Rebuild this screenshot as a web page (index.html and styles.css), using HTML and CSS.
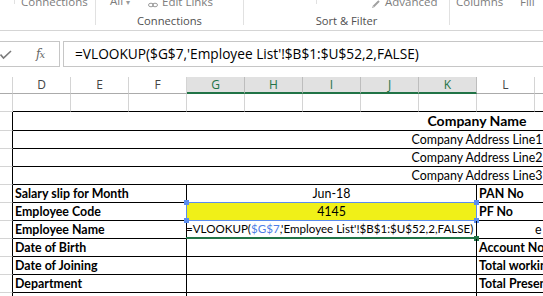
FILE: index.html
```html
<!DOCTYPE html>
<html>
<head>
<meta charset="utf-8">
<link rel="stylesheet" href="styles.css">
</head>
<body>
<div class="ribbon">
  <div class="grp g1">
    <div class="top"><span class="tsep s1"></span><span class="conn">Connections</span></div>
    <div class="lbl"></div>
  </div>
  <div class="grp g2">
    <div class="top">
      <span class="all">All <span class="caret">▾</span></span>
      <svg class="link" width="10" height="8" viewBox="0 0 10 8"><ellipse cx="3" cy="5" rx="2.5" ry="1.8" fill="none" stroke="#9a9a9a" stroke-width="1"/><ellipse cx="7" cy="5" rx="2.5" ry="1.8" fill="none" stroke="#9a9a9a" stroke-width="1"/></svg>
      <span class="edit">Edit Links</span>
    </div>
    <div class="lbl">Connections</div>
  </div>
  <div class="grp g3">
    <div class="top">
      <span class="tsep s2"></span>
      <svg class="adv" width="9" height="8" viewBox="0 0 9 8"><path d="M1 7 L7 1" stroke="#a0a0a0" stroke-width="2"/><path d="M0 8 L2 6" stroke="#c0c0c0" stroke-width="1"/></svg>
      <span class="advt">Advanced</span>
    </div>
    <div class="lbl">Sort &amp; Filter</div>
  </div>
  <div class="grp g4">
    <div class="top"><span class="cols">Columns</span><span>Fill</span></div>
    <div class="lbl"></div>
  </div>
</div>

<div class="fbar">
  <div class="fl">
    <svg class="check" width="12" height="10" viewBox="0 0 12 10"><polyline points="0.5,4.5 3.5,8 11,1" fill="none" stroke="#7a7a7a" stroke-width="1.6"/></svg>
    <span class="fx"><i>f</i><i class="x">x</i></span>
  </div>
  <div class="fi">=VLOOKUP($G$7,'Employee List'!$B$1:$U$52,2,FALSE)</div>
</div>

<div class="sheet">
  <div class="row hdr">
    <div class="rh"></div>
    <div>D</div><div>E</div><div>F</div>
    <div class="sel">G</div><div class="sel">H</div><div class="sel">I</div><div class="sel">J</div><div class="sel">K</div>
    <div>L</div><div></div><div></div><div></div><div></div><div></div><div></div><div></div>
  </div>
  <div class="row r1">
    <div class="rh"></div>
    <div></div><div></div><div></div><div></div><div></div><div></div><div></div><div></div><div></div><div></div><div></div><div></div><div></div><div></div><div></div><div></div>
  </div>
  <div class="row tbl tall">
    <div class="rh"></div>
    <div class="full b title">Company Name</div>
  </div>
  <div class="row tbl">
    <div class="rh"></div>
    <div class="full">Company Address Line1</div>
  </div>
  <div class="row tbl">
    <div class="rh"></div>
    <div class="full">Company Address Line2</div>
  </div>
  <div class="row tbl">
    <div class="rh"></div>
    <div class="full">Company Address Line3</div>
  </div>
  <div class="row tbl">
    <div class="rh"></div>
    <div class="lab b">Salary slip for Month</div>
    <div class="val">Jun-18</div>
    <div class="lc b">PAN No</div>
  </div>
  <div class="row tbl">
    <div class="rh"></div>
    <div class="lab b">Employee Code</div>
    <div class="val yellow">4145
      <div class="refbox">
        <span class="h tl"></span><span class="h tr"></span><span class="h bl"></span><span class="h br"></span>
      </div>
    </div>
    <div class="lc b">PF No</div>
  </div>
  <div class="row tbl">
    <div class="rh"></div>
    <div class="lab b">Employee Name</div>
    <div class="val edit-cell">=VLOOKUP(<span class="ref">$G$7</span>,'Employee List'!$B$1:$U$52,2,FALSE)<span class="gh"></span></div>
    <div class="lc epad">e</div>
  </div>
  <div class="row tbl">
    <div class="rh"></div>
    <div class="lab b">Date of Birth</div>
    <div class="val"></div>
    <div class="lc b">Account No.</div>
  </div>
  <div class="row tbl">
    <div class="rh"></div>
    <div class="lab b">Date of Joining</div>
    <div class="val"></div>
    <div class="lc b">Total working days</div>
  </div>
  <div class="row tbl">
    <div class="rh"></div>
    <div class="lab b">Department</div>
    <div class="val"></div>
    <div class="lc b">Total Present days</div>
  </div>
  <div class="row tbl">
    <div class="rh"></div>
    <div class="lab b">Designation</div>
    <div class="val"></div>
    <div class="lc b">Total Leave</div>
  </div>
</div>
</body>
</html>
```

FILE: styles.css
```css
html, body {
  margin: 0;
  padding: 0;
}
body {
  width: 543px;
  height: 296px;
  overflow: hidden;
  background: #ffffff;
  font-family: "Open Sans", "Liberation Sans", sans-serif;
}

/* Ribbon */
.ribbon {
  display: flex;
  height: 30px;
  border-bottom: 1px solid #d5d5d5;
}
.grp {
  flex: none;
  height: 25px;
  border-right: 1px solid #e1e1e1;
}
.g1 { width: 95px; }
.g2 { width: 147px; }
.g3 { width: 205px; }
.g4 { flex: 1; border-right: none; }

.top {
  height: 8px;
  overflow: hidden;
  display: flex;
  align-items: flex-end;
  font-size: 11.5px;
  line-height: 12px;
  color: #7d7d7d;
  white-space: nowrap;
}
.tsep {
  width: 1px;
  height: 4px;
  background: #e1e1e1;
  align-self: flex-start;
  flex: none;
}
.s1 { margin-left: 14px; }
.conn { margin-left: 6px; }
.all { margin-left: 14px; width: 38px; flex: none; }
.caret { font-size: 8px; color: #9a9a9a; }
.link { flex: none; }
.edit { margin-left: 4px; }
.s2 { margin-left: 72px; }
.adv { margin-left: 55px; flex: none; }
.advt { margin-left: 4px; }
.cols { margin-left: 6px; width: 64px; flex: none; }

.lbl {
  margin-top: 7px;
  font-size: 11.2px;
  line-height: 12px;
  color: #505050;
  text-align: center;
  white-space: nowrap;
}

/* Formula bar */
.fbar {
  display: flex;
  gap: 3px;
  margin-top: 10px;
  height: 26px;
}
.fl {
  box-sizing: border-box;
  width: 60px;
  height: 26px;
  border: 1px solid #c6c6c6;
  border-left: none;
  display: flex;
  align-items: center;
}
.check { margin-top: 1px; flex: none; }
.fx {
  margin-left: 24px;
  font-family: "DejaVu Serif", "Liberation Serif", serif;
  font-size: 12px;
  color: #666;
  letter-spacing: -1px;
}
.fx .x { font-size: 10px; }
.fi {
  box-sizing: border-box;
  flex: 1;
  height: 26px;
  border: 1px solid #c6c6c6;
  border-right: none;
  padding-left: 11px;
  font-size: 13.7px;
  line-height: 24px;
  color: #000;
  white-space: nowrap;
  overflow: hidden;
}

/* Sheet */
.sheet {
  margin-top: 10px;
  width: 543px;
  overflow: hidden;
}
.row {
  display: grid;
  grid-template-columns: 13px repeat(16, 58px);
  width: 941px;
  height: 18px;
}
.row > div {
  box-sizing: border-box;
  border-right: 1px solid #d4d4d4;
  border-bottom: 1px solid #d4d4d4;
  overflow: hidden;
  white-space: nowrap;
}

.hdr { height: 17px; }
.hdr > div {
  border-bottom: 1px solid #ababab;
  font-size: 12px;
  line-height: 16px;
  text-align: center;
  color: #444;
}
.hdr > .sel {
  background: #e1e1e1;
  color: #217346;
  border-right-color: #bdbdbd;
  border-bottom: 2px solid #217346;
  line-height: 15px;
}

.r1 > div { border-bottom-color: #000; }
.r1 > .rh { border-bottom-color: #d4d4d4; }

.tbl > div {
  font-family: "Lato", "Open Sans", sans-serif;
  font-size: 12.4px;
  line-height: 17px;
  color: #000;
  border-bottom-color: #000;
  border-right-color: #000;
}
.tbl > .rh {
  border-bottom-color: #d4d4d4;
  border-right-color: #000;
}
.tall { height: 19px; }
.tall > div { line-height: 18px; }
.b { font-weight: bold; }
.tbl > .title { font-size: 14px; }

.full {
  grid-column: 2 / -1;
  text-align: center;
  border-right: none !important;
}
.lab {
  grid-column: span 3;
  padding-left: 2px;
}
.val {
  grid-column: span 5;
  text-align: center;
  position: relative;
  overflow: visible !important;
}
.lc {
  grid-column: span 8;
  padding-left: 2px;
  border-right: none !important;
}
.epad { padding-left: 58px; }

.yellow { background: #f0f018; }
.refbox {
  position: absolute;
  top: -1px;
  left: -1px;
  right: -1px;
  bottom: -1px;
  border: 1px solid #5b8def;
  pointer-events: none;
}
.h {
  position: absolute;
  width: 5px;
  height: 5px;
  background: #5b8def;
}
.tl { top: -3px; left: -3px; }
.tr { top: -3px; right: -3px; }
.bl { bottom: -3px; left: -3px; }
.br { bottom: -3px; right: -3px; }

.tbl > .edit-cell {
  text-align: left;
  padding-left: 0;
  margin-left: -1px;
  font-size: 11.6px;
  border-bottom: 2px solid #217346;
  line-height: 16px;
}
.ref { color: #4f7fe6; }
.gh {
  position: absolute;
  right: -3px;
  bottom: -4px;
  width: 5px;
  height: 5px;
  background: #217346;
}
```
